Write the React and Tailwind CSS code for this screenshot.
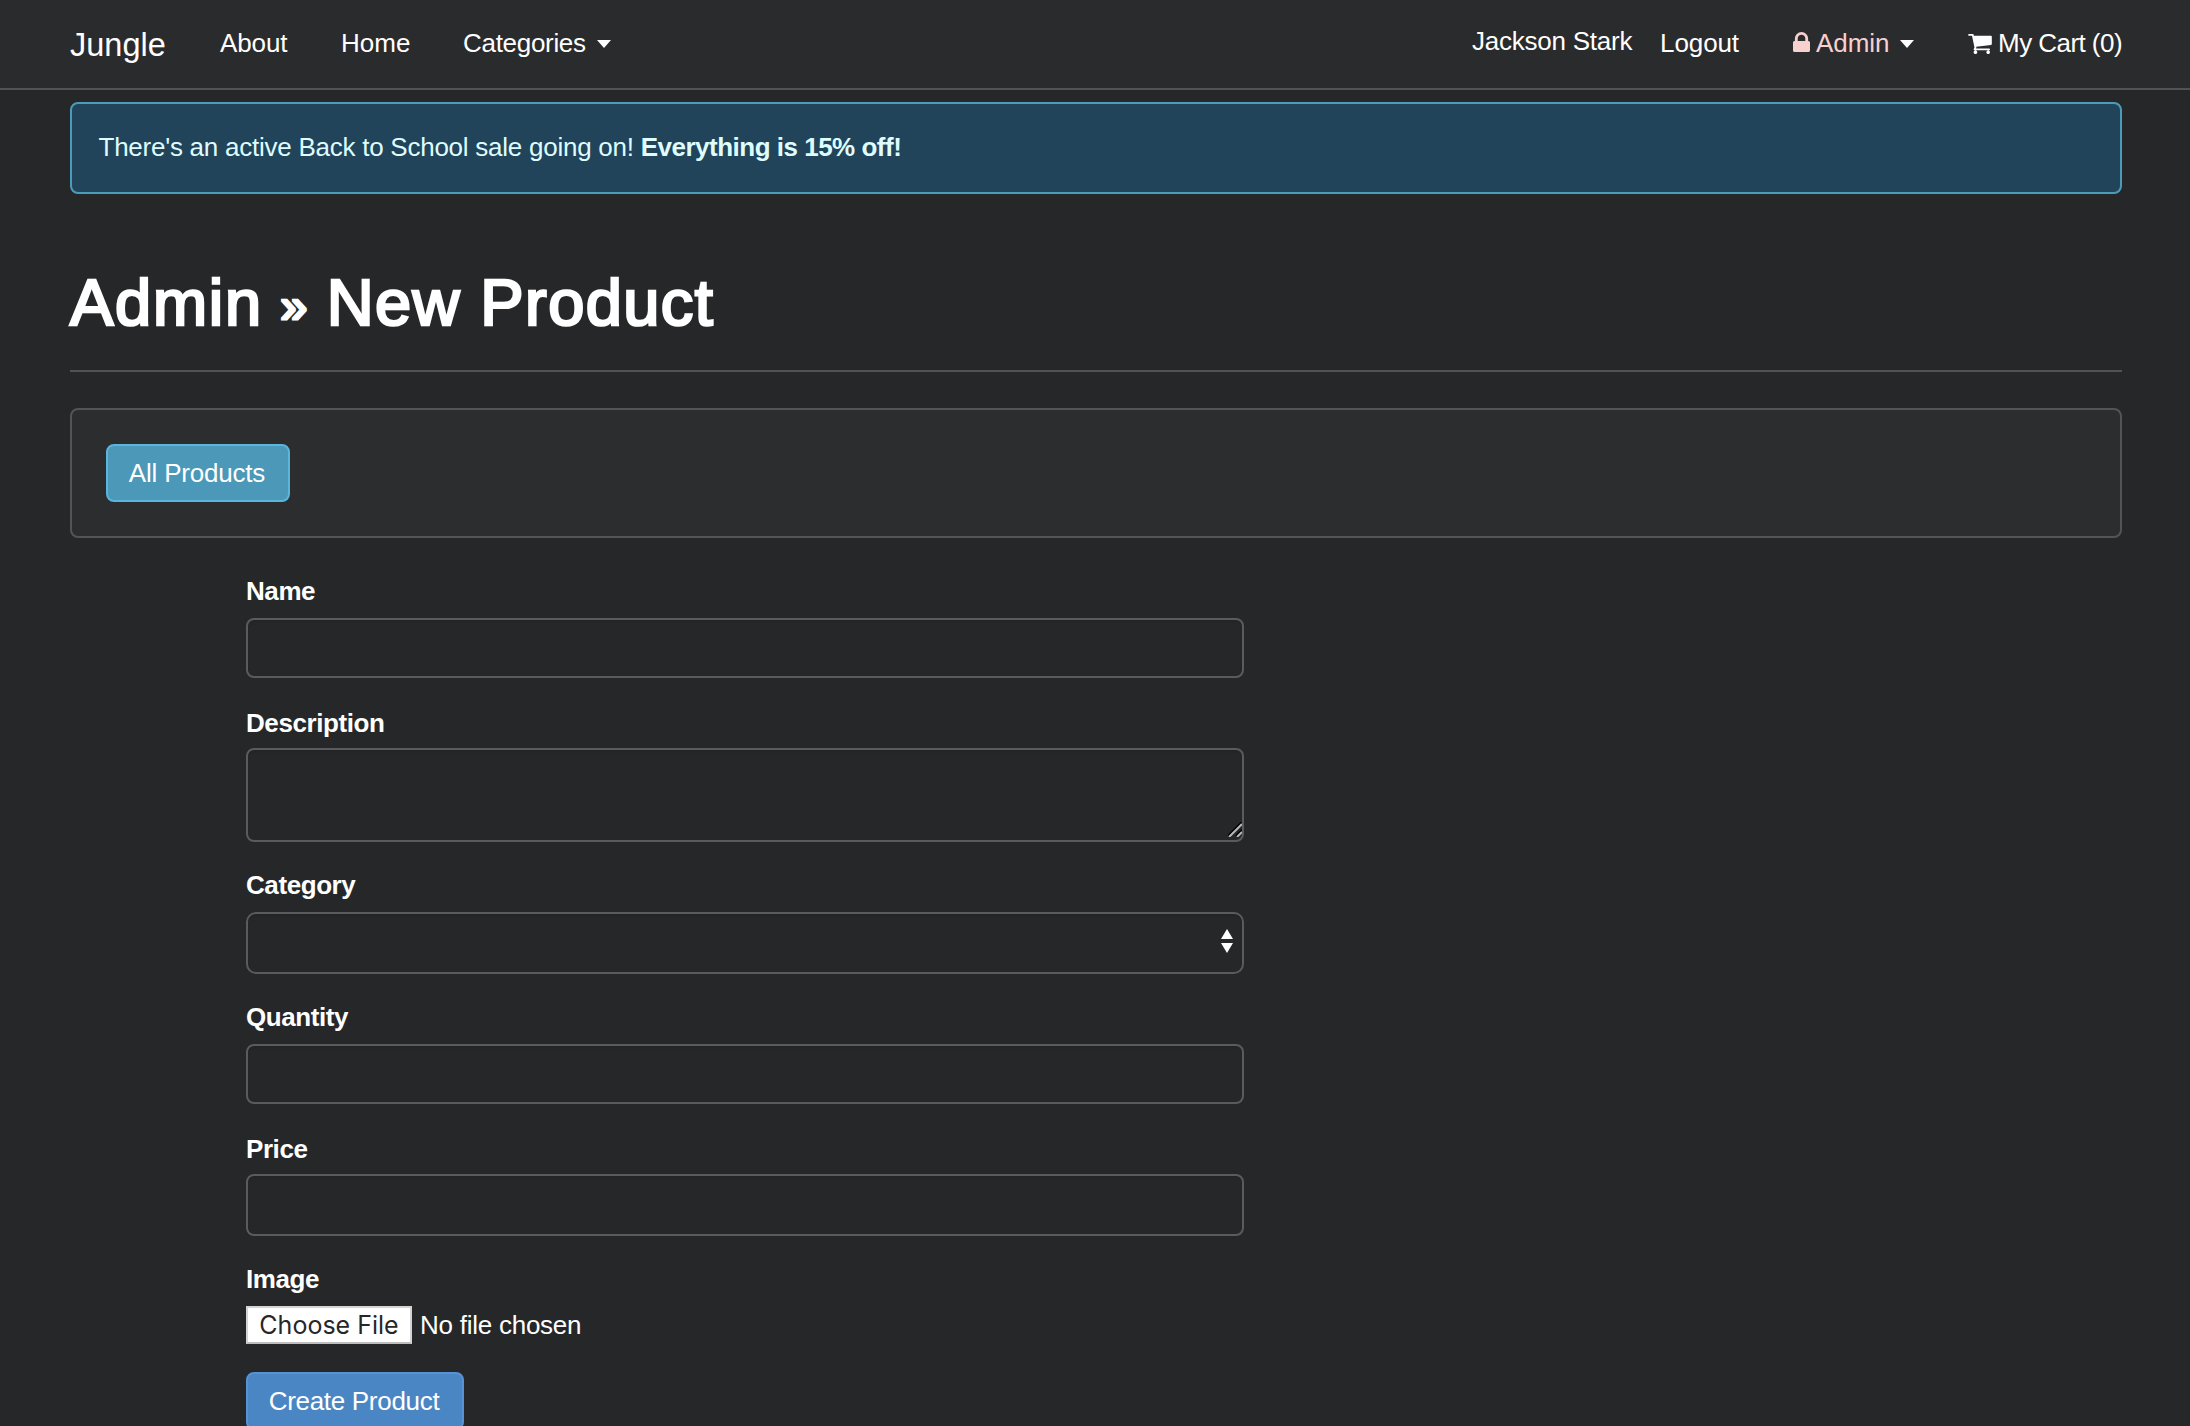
import React from "react";

function LockIcon() {
  return (
    <svg viewBox="0 128 1152 1408" className="block h-5 w-[17px] shrink-0" fill="currentColor" preserveAspectRatio="none">
      <path d="M320 768h512v-192q0-106-75-181t-181-75-181 75-75 181v192zm832 96v576q0 40-28 68t-68 28h-960q-40 0-68-28t-28-68v-576q0-40 28-68t68-28h32v-192q0-184 132-316t316-132 316 132 132 316v192h32q40 0 68 28t28 68z" />
    </svg>
  );
}

function CartIcon() {
  return (
    <svg viewBox="64 256 1664 1408" className="block h-5 w-6 shrink-0" fill="currentColor">
      <path d="M704 1536q0 52-38 90t-90 38-90-38-38-90 38-90 90-38 90 38 38 90zm896 0q0 52-38 90t-90 38-90-38-38-90 38-90 90-38 90 38 38 90zm128-1088v512q0 24-16.5 42.5t-40.5 21.5l-1044 122q13 60 13 70 0 16-24 64h920q26 0 45 19t19 45-19 45-45 19h-1024q-26 0-45-19t-19-45q0-11 8-31.5t16-36 21.5-40 15.5-29.5l-177-823h-204q-26 0-45-19t-19-45 19-45 45-19h256q16 0 28.5 6.5t19.5 15.5 13 24.5 8 26 5.5 29.5 4.5 26h1201q26 0 45 19t19 45z" />
    </svg>
  );
}

function Caret({ className }) {
  return (
    <svg viewBox="0 0 14 8" className={className} fill="#fff">
      <path d="M0 0h14L7 8z" />
    </svg>
  );
}

function NavBar() {
  return (
    <nav className="flex h-[90px] items-start justify-between border-b-2 border-[#505254] bg-[#2a2b2d] pl-[70px] pr-[68px] leading-9 text-white">
      <div className="flex items-start">
        <a className="mt-[27px] w-[150px] text-[32.5px] leading-9">Jungle</a>
        <a className="mt-[25px] w-[121px] tracking-[-0.1px]">About</a>
        <a className="mt-[25px] w-[122px]">Home</a>
        <a className="mt-[25px] flex tracking-[-0.3px]">
          <span className="w-[134px]">Categories</span>
          <Caret className="mt-[15px] h-2 w-3.5" />
        </a>
      </div>
      <div className="flex items-start">
        <span className="mt-[23px] w-[188px] tracking-[-0.24px]">Jackson Stark</span>
        <a className="mt-[25px] w-[133px] tracking-[-0.1px]">Logout</a>
        <a className="mt-[25px] flex w-[175px] text-[#f8d0ce]">
          <span className="mt-[7px] mr-1.5">
            <LockIcon />
          </span>
          <span className="w-[84px] tracking-[-0.1px]">Admin</span>
          <Caret className="mt-[15px] h-2 w-3.5" />
        </a>
        <a className="mt-[25px] flex">
          <span className="mt-[9px] mr-1.5">
            <CartIcon />
          </span>
          <span className="tracking-[-0.55px]">My Cart (0)</span>
        </a>
      </div>
    </nav>
  );
}

function Label({ children, className }) {
  return <label className={"block h-9 font-bold leading-9 text-white tracking-[-0.42px] " + className}>{children}</label>;
}

const field = "block w-[998px] border-2 border-[#5a5b5d] bg-[#262729] shadow-[inset_0_2px_2px_rgba(0,0,0,0.08)] outline-none ";

function ProductForm() {
  return (
    <form className="ml-44 mt-[35px]">
      <Label className="mb-[9px]">Name</Label>
      <input className={field + "h-[60px] rounded-lg"} />
      <Label className="mt-[27px] mb-[7px]">Description</Label>
      <div className="relative w-[998px]">
        <textarea className={field + "h-[94px] resize-none rounded-lg"} />
        <svg viewBox="0 0 14 15" className="absolute right-0.5 bottom-[5px] h-[15px] w-3.5" fill="none">
          <path d="M0 14L14 0M8 14L14 8" stroke="#000" strokeWidth="2" />
          <path d="M1 15L14 2M9 15L14 10" stroke="#b8b8b8" strokeWidth="2" />
        </svg>
      </div>
      <Label className="mt-[25px] mb-[9px]">Category</Label>
      <div className="relative w-[998px]">
        <select className={field + "h-[62px] appearance-none rounded-[10px]"} />
        <svg viewBox="0 0 12 24" className="absolute right-[11px] top-[17px] h-6 w-3" fill="#fff">
          <path d="M0 10L6 0l6 10zM0 14h12L6 24z" />
        </svg>
      </div>
      <Label className="mt-[25px] mb-[9px]">Quantity</Label>
      <input className={field + "h-[60px] rounded-lg"} />
      <Label className="mt-[27px] mb-[7px]">Price</Label>
      <input className={field + "h-[62px] rounded-lg"} />
      <Label className="mt-[25px] mb-[9px]">Image</Label>
      <div className="flex h-[38px] items-center">
        <button type="button" className="flex h-[38px] w-[166px] items-center justify-center border-2 border-[#d4d4d4] border-b-[#bdbdbd] bg-white pt-0.5 font-['Inter'] text-[25px] text-[#262729]">
          Choose File
        </button>
        <span className="ml-2 leading-9 text-white tracking-[-0.25px]">No file chosen</span>
      </div>
      <button type="button" className="mt-7 h-[58px] w-[218px] rounded-lg border-2 border-[#5592d8] bg-[#4b86c4] pr-0.5 text-white tracking-[-0.3px]">
        Create Product
      </button>
    </form>
  );
}

export default function App() {
  return (
    <div className="h-[1426px] overflow-hidden bg-[#262729] font-['Liberation_Sans',Arial,sans-serif] text-[26px]">
      <NavBar />
      <main className="pl-[70px] pr-[68px] pt-3">
        <div className="flex h-[92px] items-center rounded-lg border-2 border-[#4b9cb8] bg-[#22445a] pb-0.5 pl-[26.5px] whitespace-pre text-[#dffcff] tracking-[-0.25px]">
          <span>There's an active Back to School sale going on! </span>
          <strong className="tracking-[-0.5px]">Everything is 15% off!</strong>
        </div>
        <h1 className="mt-[73px] h-[105px] border-b-2 border-[#505254] text-[65px] leading-[72px] text-white tracking-[1.7px] [-webkit-text-stroke:2.6px_#fff]">
          Admin <span className="-mx-[2px] align-[3px] text-[48px] leading-none [-webkit-text-stroke:3px_#fff]">»</span>{" "}
          <span className="tracking-[1.4px]">New Product</span>
        </h1>
        <section className="mt-9 h-[130px] rounded-lg border-2 border-[#525456] bg-[#2c2d2f] p-[34px]">
          <button className="h-[58px] w-[184px] rounded-lg border-2 border-[#5bb5dd] bg-[#4b98b8] pr-0.5 text-white tracking-[-0.2px]">
            All Products
          </button>
        </section>
        <ProductForm />
      </main>
    </div>
  );
}
